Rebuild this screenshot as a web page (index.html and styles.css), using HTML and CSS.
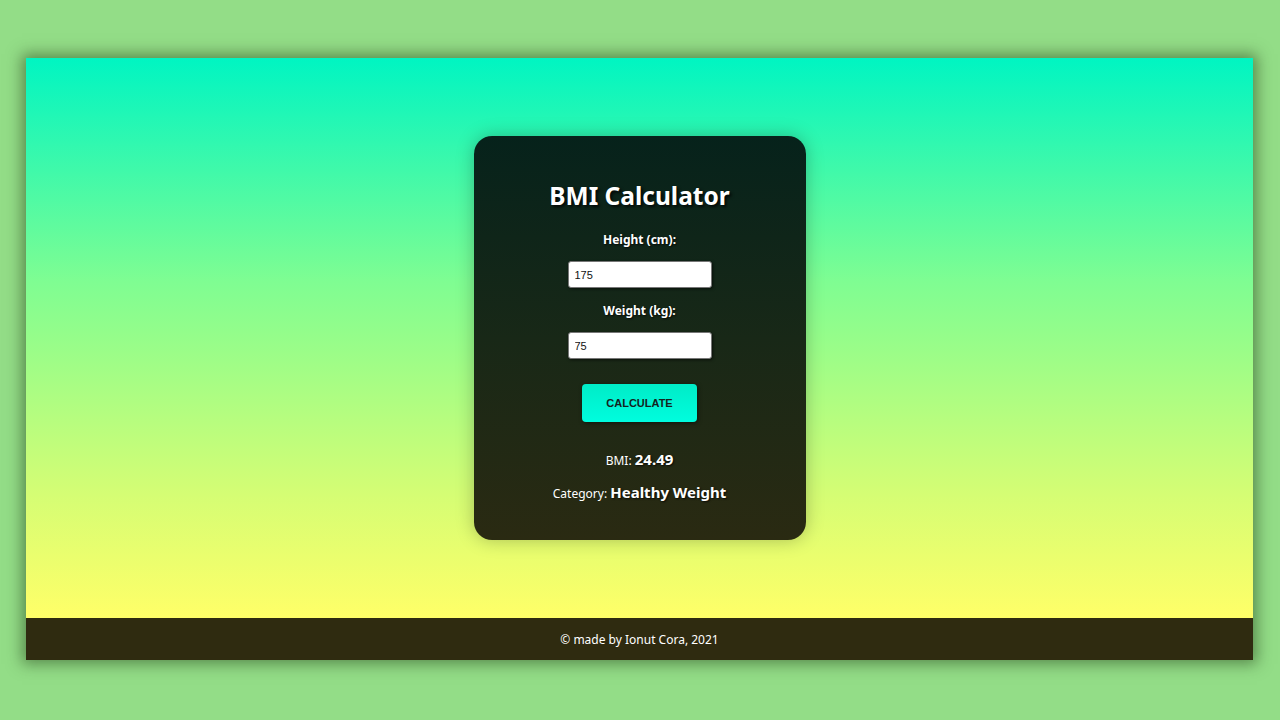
FILE: index.html
```html
<!DOCTYPE html>
<html lang="en">
<head>
<meta charset="utf-8">
<title>BMI Calculator</title>
<link rel="stylesheet" href="styles.css">
</head>
<body>
<div class="window">
  <main class="main">
    <section class="card">
      <h1 class="title">BMI Calculator</h1>
      <label class="label" for="h">Height (cm):</label>
      <input class="field" id="h" type="text" value="175">
      <label class="label label-second" for="w">Weight (kg):</label>
      <input class="field" id="w" type="text" value="75">
      <button class="btn" type="button">CALCULATE</button>
      <p class="result result-bmi">BMI: <strong class="value value-bmi">24.49</strong></p>
      <p class="result result-cat">Category: <strong class="value">Healthy Weight</strong></p>
    </section>
  </main>
  <footer class="footer">© made by Ionut Cora, 2021</footer>
</div>
</body>
</html>
```
FILE: styles.css
```css
* { box-sizing: border-box; }
html, body { margin: 0; padding: 0; }
body {
  width: 1280px;
  height: 720px;
  background: #93dd87;
  padding: 58px 27px 60px 26px;
  font-family: "Noto Sans", "Open Sans", sans-serif;
  overflow: hidden;
}
.window {
  height: 602px;
  display: flex;
  flex-direction: column;
  box-shadow: 0 0 14px 4px rgba(40, 70, 30, 0.55);
}
.main {
  flex: 1;
  background: linear-gradient(to bottom, #00f5c2 0%, #7ffd92 40%, #d5fd74 78%, #ffff68 100%);
  display: flex;
  align-items: center;
  justify-content: center;
}
.card {
  width: 332px;
  height: 404px;
  border-radius: 18px;
  background: linear-gradient(to bottom, #06221b 0%, #182817 50%, #2a2a12 100%);
  box-shadow: 0 0 18px rgba(0, 0, 0, 0.25);
  display: flex;
  flex-direction: column;
  align-items: center;
  padding-top: 44px;
  color: #fff;
}
.title {
  margin: 0;
  font-size: 24.5px;
  line-height: 32px;
  font-weight: 700;
  text-shadow: 2px 2px 3px rgba(0, 0, 0, 0.8);
}
.label {
  margin-top: 19px;
  font-size: 12px;
  line-height: 18px;
  font-weight: 700;
  text-shadow: 1px 1px 2px rgba(0, 0, 0, 0.8);
}
.label-second { margin-top: 14px; }
.field {
  margin-top: 12px;
  width: 144px;
  height: 27px;
  border: 1px solid #777;
  border-radius: 3px;
  background: #fff;
  padding: 0 6px;
  font-family: "Liberation Sans", Arial, sans-serif;
  font-size: 11px;
  color: #111;
  box-shadow: 1px 1px 3px rgba(0, 0, 0, 0.6);
}
.btn {
  margin-top: 25px;
  width: 115px;
  height: 38px;
  border: none;
  border-radius: 4px;
  background: linear-gradient(to bottom, #00ecc7 0%, #00fdde 100%);
  font-family: "Liberation Sans", Arial, sans-serif;
  font-weight: 700;
  font-size: 11px;
  color: #14231d;
  box-shadow: 1px 1px 4px rgba(0, 0, 0, 0.5);
}
.result {
  margin: 27px 0 0;
  font-size: 12px;
  line-height: 20px;
}
.result-cat { margin-top: 11px; }
.value {
  font-size: 15px;
  font-weight: 700;
  text-shadow: 1px 1px 2px rgba(0, 0, 0, 0.8);
}
.footer {
  height: 42px;
  background: #2f2b10;
  color: #fff;
  font-size: 12px;
  display: flex;
  align-items: center;
  justify-content: center;
}
```
